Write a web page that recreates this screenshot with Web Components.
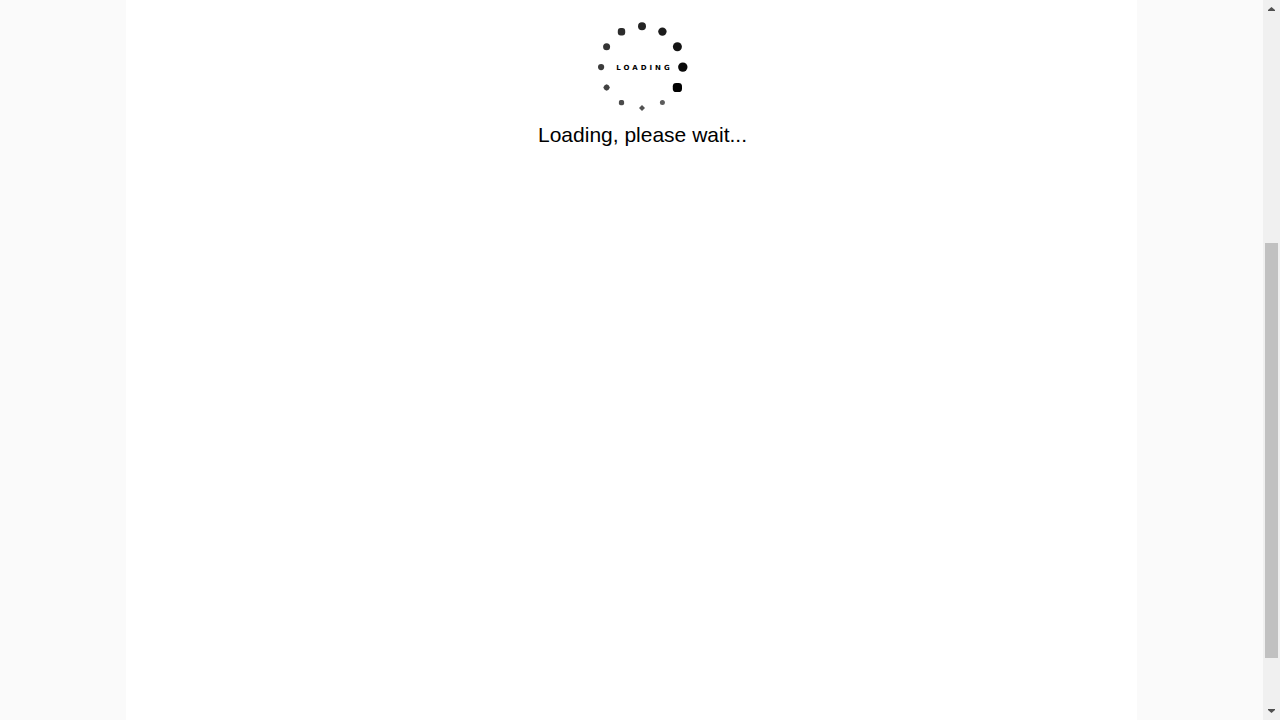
<!DOCTYPE html>
<html lang="en">
<head>
<meta charset="utf-8">
<title>Loading</title>
<style>
html, body { height: 100%; margin: 0; }
body { overflow: hidden; background: #fafafa; color: #000; font-family: "Liberation Sans", Arial, sans-serif; }
</style>
</head>
<body>
<page-shell>
  <loading-status>Loading, please wait...</loading-status>
</page-shell>
<script>
customElements.define("loading-spinner", class extends HTMLElement {
  constructor() {
    super();
    this.attachShadow({ mode: "open" }).innerHTML = `
      <style>
        :host { display: grid; width: 100px; height: 100px; place-items: center; }
        svg, span { grid-area: 1 / 1; }
        span { font-family: "DejaVu Sans", sans-serif; font-size: 7px; font-weight: bold; line-height: 8px; letter-spacing: 3px; padding: 2px 0 0 4px; }
      </style>
      <svg width="100" height="100" viewBox="0 0 100 100" aria-hidden="true">
        <circle cx="50" cy="9.3" r="4" fill="#242424"/>
        <circle cx="70.4" cy="14.6" r="4.2" fill="#1c1c1c"/>
        <circle cx="85.4" cy="29.7" r="4.5" fill="#141414"/>
        <circle cx="90.8" cy="50.1" r="4.7" fill="#0a0a0a"/>
        <rect x="80.8" y="65.9" width="9.2" height="9.2" rx="3.4" fill="#000"/>
        <circle cx="70.4" cy="85.6" r="2.5" fill="#5c5c5c"/>
        <path d="M50 88l3 3-3 3-3-3z" fill="#525252"/>
        <rect x="26.9" y="83" width="5.2" height="5.2" rx="1.8" fill="#4a4a4a"/>
        <path d="M14.6 67.2l2 1 1.3 2.3-1.3 2.2-2 1-2-1-1.3-2.2 1.3-2.3z" fill="#424242"/>
        <circle cx="9.1" cy="50.1" r="3.1" fill="#3c3c3c"/>
        <circle cx="14.6" cy="29.7" r="3.5" fill="#343434"/>
        <rect x="25.8" y="11" width="7.4" height="7.4" rx="2.9" fill="#2c2c2c"/>
      </svg>
      <span>LOADING</span>`;
  }
});

customElements.define("loading-status", class extends HTMLElement {
  constructor() {
    super();
    this.attachShadow({ mode: "open" }).innerHTML = `
      <style>
        :host { display: flex; flex-direction: column; align-items: center; gap: 6px; padding: 17px 0 0 22px; }
        p { margin: 0; font-size: 21px; line-height: 24px; }
      </style>
      <loading-spinner></loading-spinner>
      <p role="status"><slot></slot></p>`;
  }
});

customElements.define("scroll-rail", class extends HTMLElement {
  constructor() {
    super();
    this.attachShadow({ mode: "open" }).innerHTML = `
      <style>
        :host { display: flex; flex-direction: column; background: #f0f0f0; }
        button { display: block; height: 17px; padding: 0; border: 0; background: none; }
        svg { display: block; }
        .track { flex: 1; display: grid; grid-template-rows: 226fr 415fr 45fr; padding: 0 2px; }
        .thumb { grid-row: 2; background: #c1c1c1; }
      </style>
      <button aria-label="Scroll up"><svg width="17" height="17"><path d="M5 11h7v-1L8.5 7 5 10z" fill="#505050"/></svg></button>
      <div class="track"><div class="thumb"></div></div>
      <button aria-label="Scroll down"><svg width="17" height="17"><path d="M5 9h7v1L8.5 13 5 10z" fill="#505050" transform="translate(0 -3)"/></svg></button>`;
  }
});

customElements.define("page-shell", class extends HTMLElement {
  constructor() {
    super();
    this.attachShadow({ mode: "open" }).innerHTML = `
      <style>
        :host { display: grid; grid-template-columns: 1fr 17px; min-height: 100%; }
        main { width: 80%; margin: 0 auto; background: #fff; }
      </style>
      <main><slot></slot></main>
      <scroll-rail></scroll-rail>`;
  }
});
</script>
</body>
</html>
